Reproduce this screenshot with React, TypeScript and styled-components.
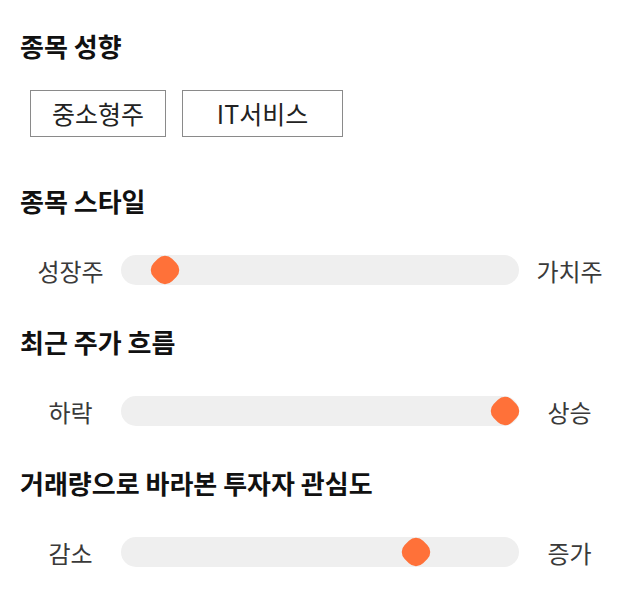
import { createGlobalStyle, styled } from 'styled-components'

const GlobalStyle = createGlobalStyle`
  html, body {
    margin: 0;
    padding: 0;
    background: #ffffff;
  }
  body {
    font-family: 'Noto Sans CJK KR', 'Noto Sans', sans-serif;
    color: #111111;
  }
`

const Page = styled.div`
  display: flex;
  flex-direction: column;
  gap: 37px;
  width: 640px;
  padding-top: 31px;
  box-sizing: border-box;
`

const Section = styled.section<{ $extraBottom?: number }>`
  display: flex;
  flex-direction: column;
  padding: 0 20px;
  padding-bottom: ${({ $extraBottom }) => $extraBottom ?? 0}px;
`

const Heading = styled.h2<{ $gap: number }>`
  margin: 0 0 ${({ $gap }) => $gap}px;
  font-size: 26px;
  line-height: 30px;
  font-weight: 700;
  color: #111111;
`

const ChipRow = styled.div`
  display: flex;
  gap: 16px;
  padding-left: 10px;
`

const Chip = styled.button<{ $width: number }>`
  width: ${({ $width }) => $width}px;
  height: 47px;
  padding: 0;
  border: 1px solid #8a8a8a;
  background: #ffffff;
  font-family: inherit;
  font-size: 25px;
  line-height: 1;
  color: #222222;
  display: flex;
  align-items: center;
  justify-content: center;
`

const SliderRow = styled.div`
  display: flex;
  align-items: center;
  height: 40px;
`

const SideLabel = styled.span`
  width: 101px;
  flex: none;
  text-align: center;
  font-size: 24px;
  color: #3a3a3a;
`

const Track = styled.div`
  position: relative;
  flex: 1;
  height: 30px;
  border-radius: 15px;
  background: #efefef;
`

const Thumb = styled.div`
  position: absolute;
  top: 50%;
  width: 26px;
  height: 26px;
  margin-left: -13px;
  margin-top: -13px;
  border-radius: 10px;
  background: #ff7139;
  transform: rotate(45deg);
`

type SliderProps = { left: string; right: string; value: number }

const Slider = ({ left, right, value }: SliderProps) => (
  <SliderRow>
    <SideLabel>{left}</SideLabel>
    <Track>
      <Thumb style={{ left: `calc(14.5px + (100% - 29px) * ${value / 100})` }} />
    </Track>
    <SideLabel>{right}</SideLabel>
  </SliderRow>
)

const sliders = [
  { title: '종목 스타일', left: '성장주', right: '가치주', value: 8 },
  { title: '최근 주가 흐름', left: '하락', right: '상승', value: 100 },
  { title: '거래량으로 바라본 투자자 관심도', left: '감소', right: '증가', value: 76 },
]

const App = () => (
  <>
    <GlobalStyle />
    <Page>
      <Section $extraBottom={12}>
        <Heading $gap={29}>종목 성향</Heading>
        <ChipRow>
          <Chip $width={136}>중소형주</Chip>
          <Chip $width={161}>IT서비스</Chip>
        </ChipRow>
      </Section>
      {sliders.map((s) => (
        <Section key={s.title}>
          <Heading $gap={34}>{s.title}</Heading>
          <Slider left={s.left} right={s.right} value={s.value} />
        </Section>
      ))}
    </Page>
  </>
)

export default App
